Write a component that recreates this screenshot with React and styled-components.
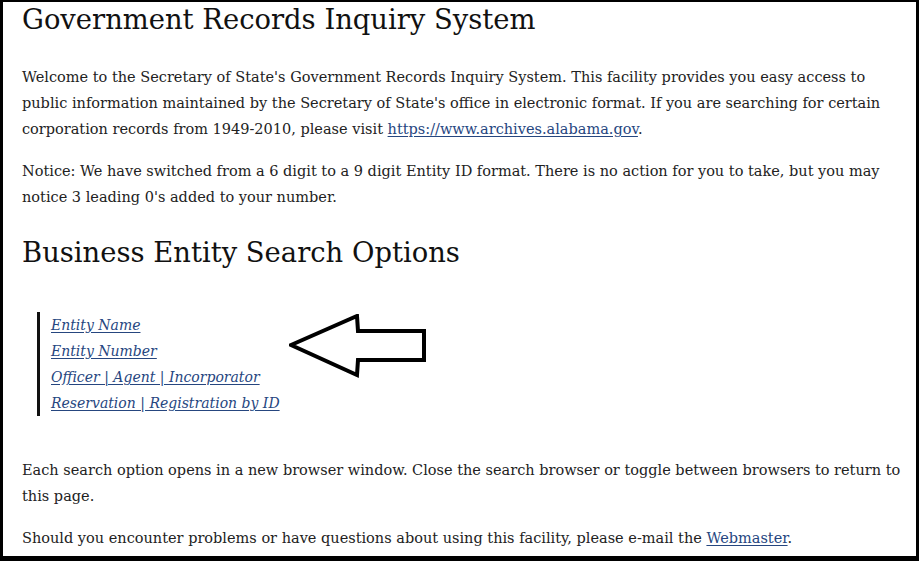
import React from "react";
import styled, { createGlobalStyle } from "styled-components";

const Global = createGlobalStyle`
  html, body { margin: 0; padding: 0; background: #fff; }
  body { font-family: "DejaVu Serif", "Liberation Serif", serif; }
`;

const Frame = styled.div`
  box-sizing: border-box;
  width: 919px;
  height: 561px;
  overflow: hidden;
  border-style: solid;
  border-color: #000;
  border-width: 2px 3px 5px 3px;
  background: #fff;
`;

const Content = styled.div`
  padding: 0 6px 0 19px;
  color: #222;
`;

const Title = styled.h1`
  margin: 0;
  padding-top: 1px;
  font-weight: 400;
  font-size: 27.4px;
  line-height: 34px;
  color: #111;
`;

const SubTitle = styled.h2`
  margin: 26px 0 0;
  font-weight: 400;
  font-size: 27.4px;
  line-height: 34px;
  color: #111;
`;

const Para = styled.p`
  margin: ${(p) => p.$top || 0}px 0 0;
  font-size: 14.5px;
  line-height: 26px;
`;

const Link = styled.a`
  color: #26467f;
  text-decoration: underline;
  text-underline-offset: 2px;
`;

const OptionsRow = styled.div`
  display: flex;
  align-items: flex-start;
  margin-top: 42px;
  margin-left: 15px;
  gap: 9px;
`;

const OptionList = styled.ul`
  list-style: none;
  margin: 0;
  padding: 0 0 0 11px;
  border-left: 3px solid #111;
`;

const OptionItem = styled.li`
  font-size: 14px;
  line-height: 26px;
  font-style: italic;
`;

const Arrow = styled.svg`
  display: block;
  margin-top: 2px;
  flex: none;
`;

export default function App() {
  const options = [
    "Entity Name",
    "Entity Number",
    "Officer | Agent | Incorporator",
    "Reservation | Registration by ID",
  ];
  return (
    <>
      <Global />
      <Frame>
        <Content>
          <Title>Government Records Inquiry System</Title>
          <Para $top={27}>
            Welcome to the Secretary of State's Government Records Inquiry System. This facility provides you easy access to public information maintained by the Secretary of State's office in electronic format. If you are searching for certain corporation records from 1949-2010, please visit{" "}
            <Link href="#">https://www.archives.alabama.gov</Link>.
          </Para>
          <Para $top={16}>
            Notice: We have switched from a 6 digit to a 9 digit Entity ID format. There is no action for you to take, but you may notice 3 leading 0's added to your number.
          </Para>
          <SubTitle>Business Entity Search Options</SubTitle>
          <OptionsRow>
            <OptionList>
              {options.map((o) => (
                <OptionItem key={o}>
                  <Link href="#">{o}</Link>
                </OptionItem>
              ))}
            </OptionList>
            <Arrow width="140" height="66" viewBox="0 0 140 66">
              <polygon
                points="2,31 68,2 69,17 135,17 135,46 69,46 68,61"
                fill="none"
                stroke="#000"
                strokeWidth="4"
                strokeLinejoin="miter"
              />
            </Arrow>
          </OptionsRow>
          <Para $top={41}>
            Each search option opens in a new browser window. Close the search browser or toggle between browsers to return to this page.
          </Para>
          <Para $top={16}>
            Should you encounter problems or have questions about using this facility, please e-mail the{" "}
            <Link href="#">Webmaster</Link>.
          </Para>
        </Content>
      </Frame>
    </>
  );
}
